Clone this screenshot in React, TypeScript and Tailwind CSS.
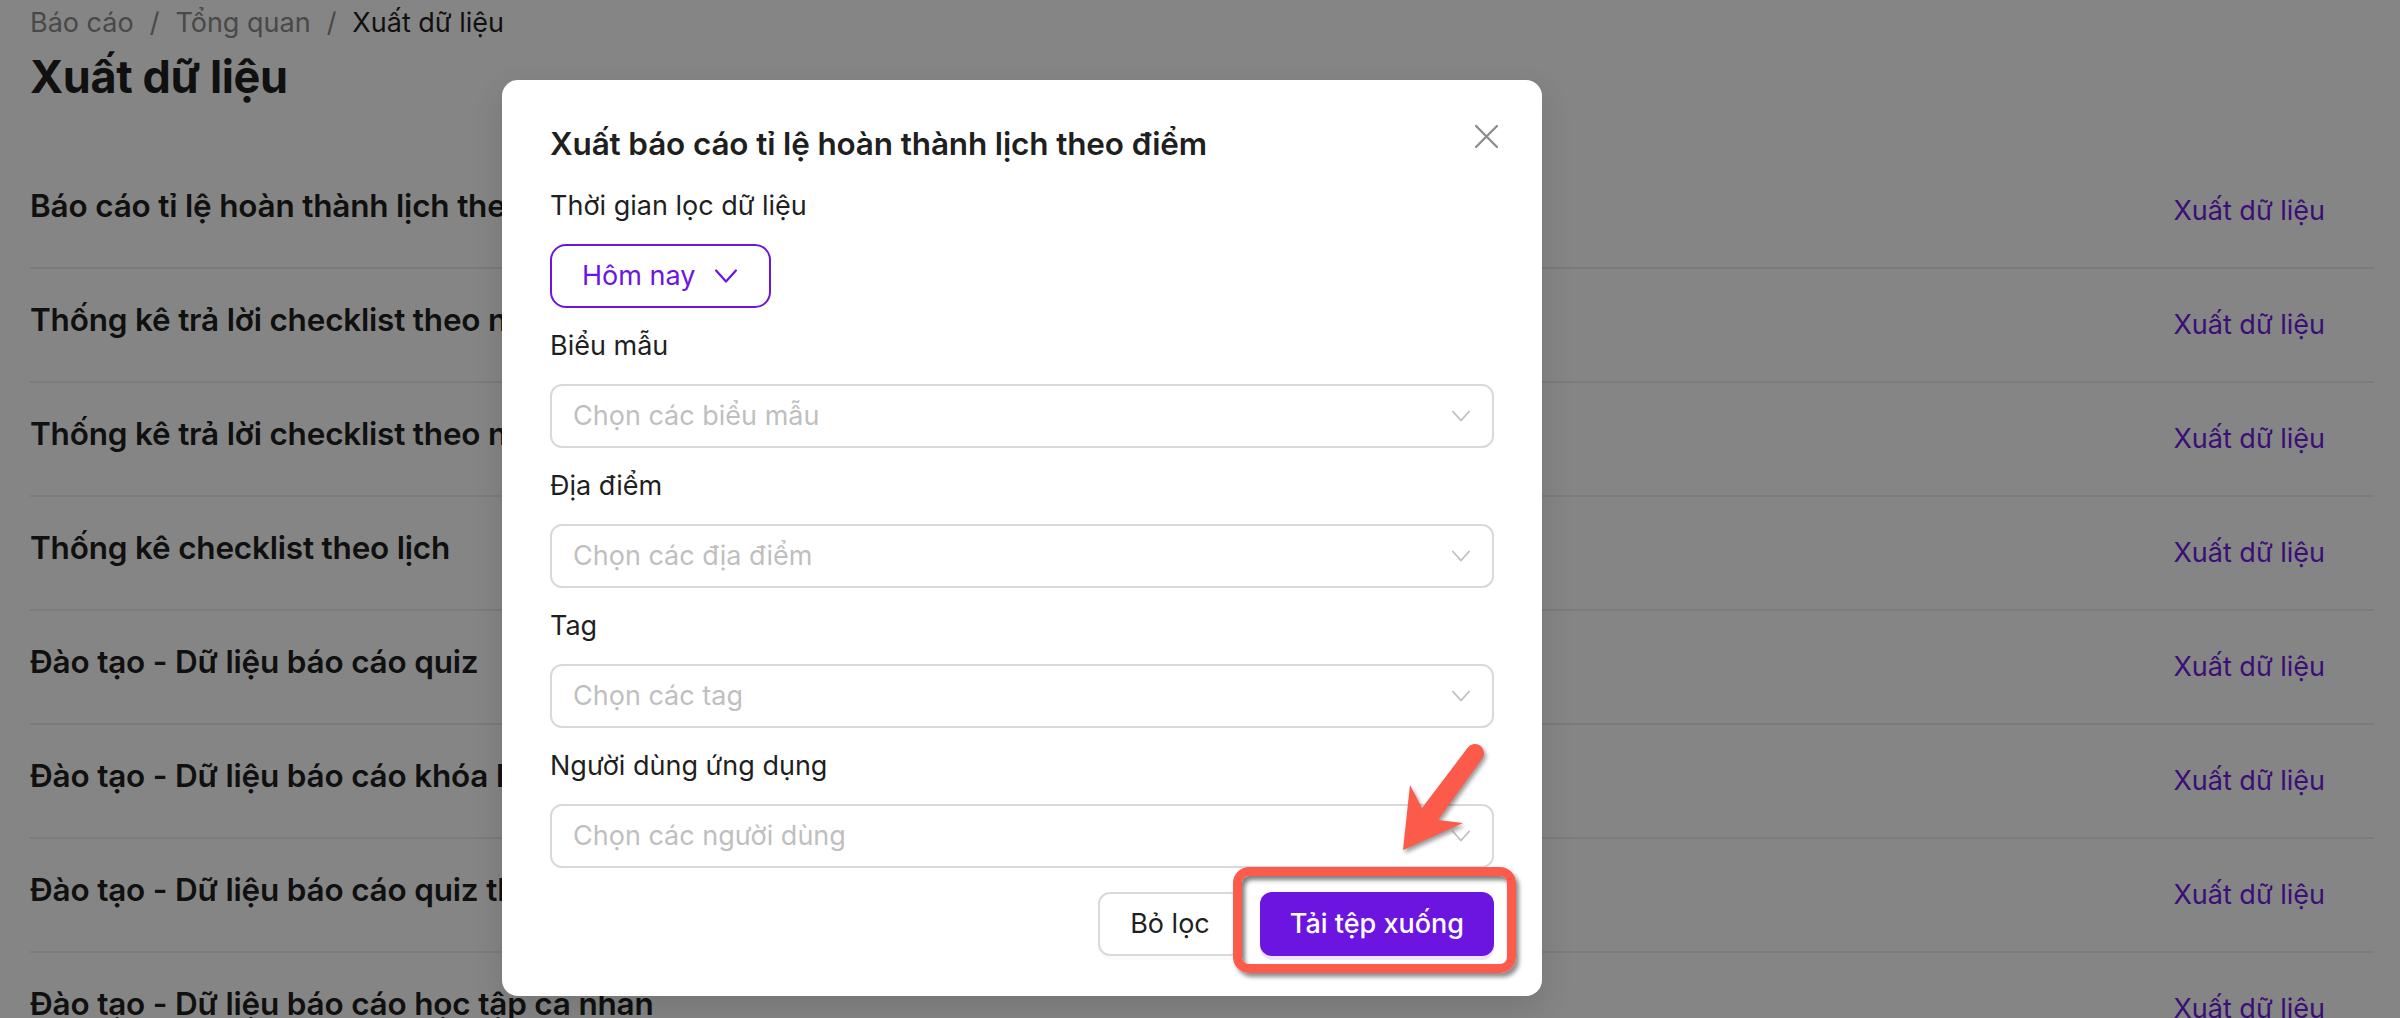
import React from 'react';

const REPORTS = [
  'Báo cáo tỉ lệ hoàn thành lịch theo điểm',
  'Thống kê trả lời checklist theo người dùng',
  'Thống kê trả lời checklist theo ngày',
  'Thống kê checklist theo lịch',
  'Đào tạo - Dữ liệu báo cáo quiz',
  'Đào tạo - Dữ liệu báo cáo khóa học',
  'Đào tạo - Dữ liệu báo cáo quiz theo khóa học',
  'Đào tạo - Dữ liệu báo cáo học tập cá nhân'];

const FIELDS = [
  { label: 'Biểu mẫu', placeholder: 'Chọn các biểu mẫu' },
  { label: 'Địa điểm', placeholder: 'Chọn các địa điểm' },
  { label: 'Tag', placeholder: 'Chọn các tag' },
  { label: 'Người dùng ứng dụng', placeholder: 'Chọn các người dùng' }];

function Chevron({ className }: { className?: string }) {
  return (
    <svg viewBox="0 0 20 12" fill="none" className={className}>
      <polyline points="1,1 10,11 19,1" stroke="currentColor" strokeWidth="2" strokeLinejoin="round" strokeLinecap="round" />
    </svg>);
}

export default function App() {
  return (
    <div className="relative h-[1018px] w-[2400px] overflow-hidden bg-white font-['Inter',sans-serif] text-[#1f1f1f]">
      {/* page */}
      <div className="pl-[30px] pr-[26px] pt-[1px]">
        <nav className="flex items-center text-[27px] leading-[44px] text-[#8c8c8c]">
          <span>Báo cáo</span>
          <span className="mx-[16px]">/</span>
          <span>Tổng quan</span>
          <span className="mx-[16px]">/</span>
          <span className="text-[#1f1f1f]">Xuất dữ liệu</span>
        </nav>
        <h1 className="mt-[2px] text-[45px] font-bold leading-[60px] tracking-[-0.4px]">Xuất dữ liệu</h1>

        <div className="mt-[48px]">
          {REPORTS.map((r) =>
          <div key={r} className="flex items-center justify-between border-b-2 border-[#ececef] py-[24px]">
              <h5 className="mb-[10px] text-[31.5px] font-semibold leading-[48px] tracking-[-0.2px]">{r}</h5>
              <a className="flex h-[64px] items-center pl-[30px] pr-[49px] text-[27px] text-[#7020e4]">Xuất dữ liệu</a>
            </div>
          )}
        </div>
      </div>

      {/* mask */}
      <div className="absolute inset-0 bg-black/[0.48]" />

      {/* modal */}
      <div className="absolute left-[502px] top-[80px] w-[1040px] rounded-[16px] bg-white px-[48px] pb-[40px] pt-[40px] shadow-[0_12px_32px_rgba(0,0,0,0.12)]">
        <button className="absolute right-[34px] top-[34px] flex h-[44px] w-[44px] items-center justify-center text-[#8c8c8c]">
          <svg viewBox="0 0 22 22" className="h-[23px] w-[23px]" fill="none">
            <path d="M1 1 L21 21 M21 1 L1 21" stroke="currentColor" strokeWidth="2.2" strokeLinecap="round" />
          </svg>
        </button>
        <h2 className="mb-[16px] text-[31.5px] font-semibold leading-[48px] tracking-[-0.15px]">Xuất báo cáo tỉ lệ hoàn thành lịch theo điểm</h2>

        <div className="flex flex-col gap-[16px]">
          <div>
            <div className="mb-[16px] text-[27px] leading-[44px]">Thời gian lọc dữ liệu</div>
            <button className="flex h-[64px] items-center gap-[20px] rounded-[16px] border-2 border-[#6c15e0] pl-[30px] pr-[32px] text-[27px] text-[#6c15e0]">
              Hôm nay
              <Chevron className="h-[14px] w-[22px]" />
            </button>
          </div>
          {FIELDS.map((f) =>
          <div key={f.label}>
              <div className="mb-[16px] text-[27px] leading-[44px]">{f.label}</div>
              <div className="flex h-[64px] items-center justify-between rounded-[12px] border-2 border-[#d9d9d9] pl-[21px] pr-[22px]">
                <span className="text-[27px] text-[#bfbfbf]">{f.placeholder}</span>
                <Chevron className="h-[12px] w-[18px] text-[#bfbfbf]" />
              </div>
            </div>
          )}
        </div>

        <div className="mt-[24px] flex justify-end gap-[18px]">
          <button className="h-[64px] rounded-[12px] border-2 border-[#d9d9d9] px-[30px] text-[27px] shadow-[0_4px_0_rgba(0,0,0,0.02)]">Bỏ lọc</button>
          <button className="h-[64px] rounded-[12px] bg-[#6c15e0] px-[30px] text-[27px] font-medium text-white shadow-[0_4px_0_rgba(108,21,224,0.12)]">Tải tệp xuống</button>
        </div>
      </div>

      {/* annotation: highlight box */}
      <div className="absolute left-[1233px] top-[867px] h-[106px] w-[283px] rounded-[16px] border-[9px] border-[#fc5a4a] shadow-[3px_4px_4px_rgba(0,0,0,0.45),inset_3px_4px_4px_rgba(0,0,0,0.5)]" />

      {/* annotation: arrow */}
      <svg className="absolute left-[1380px] top-[730px] h-[140px] w-[120px] drop-shadow-[2px_3px_2px_rgba(0,0,0,0.4)]" viewBox="0 0 120 140">
        <path d="M87.8 17.6 L42 78 L30 55 L23 120 L83 93 L58 90 L102.2 28.4 A9 9 0 0 0 87.8 17.6 Z" fill="#fc5a4a" />
      </svg>
    </div>);
}
